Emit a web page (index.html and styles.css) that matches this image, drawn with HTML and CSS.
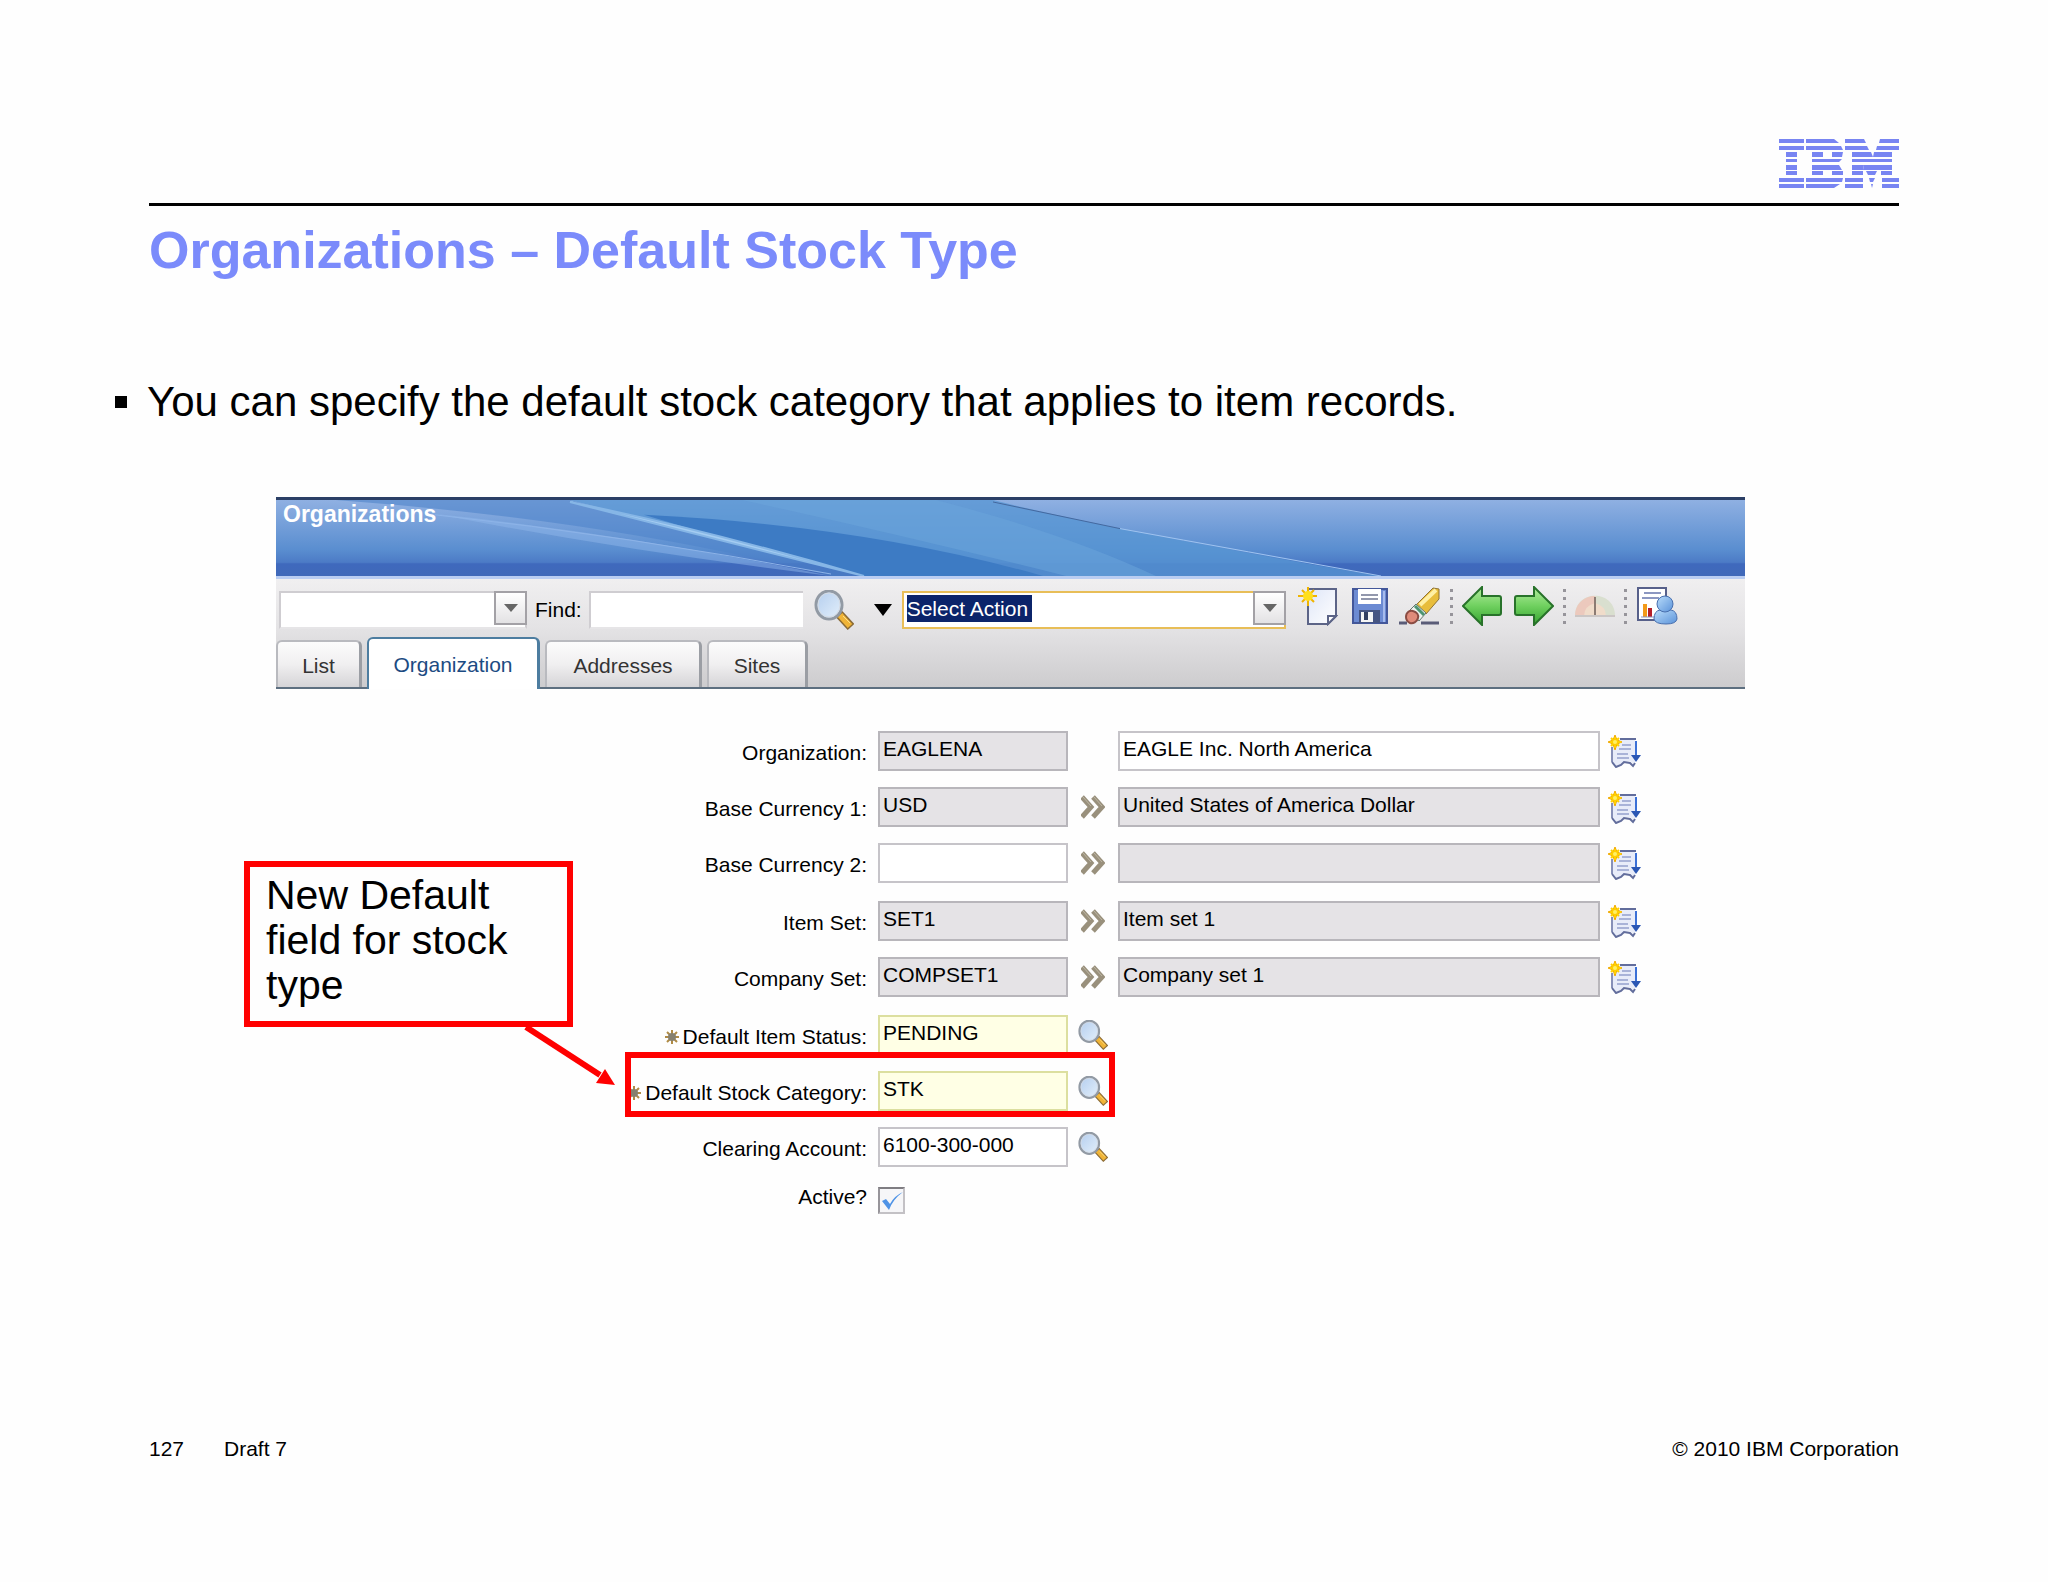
FILE: index.html
```html
<!DOCTYPE html>
<html lang="en">
<head>
    <meta charset="UTF-8">
    <meta name="viewport" content="width=device-width, initial-scale=1.0">
    <title>Organizations – Default Stock Type</title>
    <link rel="stylesheet" href="styles.css">
</head>
<body>
    <!-- Shared icons -->
    <svg class="sprite" aria-hidden="true">
        <defs>
            <linearGradient id="green" x1="0" y1="0" x2="0" y2="1">
                <stop offset="0" stop-color="#b4ec9e"/>
                <stop offset="0.5" stop-color="#6fd05f"/>
                <stop offset="1" stop-color="#35a32f"/>
            </linearGradient>
            <linearGradient id="paper" x1="0" y1="0" x2="1" y2="1">
                <stop offset="0" stop-color="#dfe6f8"/>
                <stop offset="1" stop-color="#ffffff"/>
            </linearGradient>
            <linearGradient id="glass" x1="0" y1="0" x2="1" y2="1">
                <stop offset="0" stop-color="#b3cdee"/>
                <stop offset="1" stop-color="#e4f0fb"/>
            </linearGradient>
            <linearGradient id="person" x1="0" y1="0" x2="1" y2="1">
                <stop offset="0" stop-color="#b9dcfa"/>
                <stop offset="1" stop-color="#5b93da"/>
            </linearGradient>
        </defs>
        <symbol id="search" viewBox="0 0 40 40">
            <path d="M25 24l12 13" stroke="#8a6a35" stroke-width="9"/>
            <path d="M26 25l10 11" stroke="#f0b437" stroke-width="6"/>
            <path d="M29 26l7 7" stroke="#fbe08a" stroke-width="1"/>
            <ellipse cx="15" cy="15" rx="13" ry="14" fill="url(#glass)" stroke="#929aa4" stroke-width="3"/>
            <ellipse cx="15" cy="15" rx="11" ry="12" fill="none" stroke="#d5dbe3" stroke-width="1"/>
        </symbol>
        <symbol id="goto" viewBox="0 0 24 24">
            <path d="M1 2l9 10-9 10M12 2l9 10-9 10" fill="none" stroke="#99907c" stroke-width="5"/>
            <path d="M2 2l8 9M13 2l8 9" fill="none" stroke="#bdb6a3" stroke-width="1"/>
        </symbol>
        <symbol id="longdesc" viewBox="0 0 33 33">
            <path d="M4 5h23v22l-2 2-3-3-5 1-4 3-5 1-4-4z" fill="#e8ecf9"/>
            <path d="M12 4h16" stroke="#626d9c" stroke-width="2"/>
            <path d="M4 12v15" stroke="#8790b8" stroke-width="2"/>
            <path d="M4 27l4 5 5-2 3-3 6 1 3 3 2-3" fill="none" stroke="#626d9c" stroke-width="2"/>
            <path d="M14 10h9M11 14h12M9 19h11M9 23h12" stroke="#a9b3d8" stroke-width="2"/>
            <path d="M28 6v15" stroke="#3b70d6" stroke-width="2"/>
            <path d="M23 20h10l-5 7z" fill="#2b57b4"/>
            <path d="M7 0l2 5 5 2-5 2-2 6-2-6-5-2 5-2z" fill="#ffd800" stroke="#f0a800" stroke-width="1"/>
            <path d="M7 2v11M2 7h11M3 3l8 8M11 3l-8 8" stroke="#ffcf00" stroke-width="2"/>
            <circle cx="7" cy="7" r="2" fill="#fff066"/>
        </symbol>
        <symbol id="required" viewBox="0 0 14 14">
            <path d="M7 0v14M0 7h14M2 2l10 10M12 2L2 12" stroke="#b08b45" stroke-width="2"/>
            <circle cx="7" cy="7" r="4" fill="#86806f"/>
        </symbol>
    </svg>

    <main class="slide">
        <header class="slide-header">
            <!-- Striped logo -->
            <svg class="logo" viewBox="0 0 120 49" role="img" aria-label="IBM">
                <g fill="#7885f2">
                    <path d="M0 0h25v4H0zM0 7h25v4H0zM7 13h11v5H7zM7 20h11v3H7zM7 26h11v5H7zM7 32h11v4H7zM0 39h25v4H0zM0 45h25v4H0z"/>
                    <path d="M27 0h28l5 4H27zM27 7h35l2 4H27zM33 13h11v5H33zM53 13h11l-1 5H53zM33 20h30l-3 3H33zM33 26h27l3 5H33zM33 32h11v4H33zM53 32h11v4H53zM27 39h37l-1 4H27zM27 45h34l-6 4H27z"/>
                    <path d="M66 0h19l2 4H66zM66 7h22l2 4H66zM73 13h19l2 5H73zM73 20h40v3H73zM73 26h11l1 5H73zM73 32h11v4H73zM66 39h18v4H66zM66 45h18v4H66z"/>
                    <path d="M101 0h19v4H100zM98 7h22v4H97zM95 13h18v5H94zM84 26h29v5H85zM87 32h11l-2 4h-7zM102 32h11v4h-11zM90 39h6l-2 4h-3zM103 39h17v4h-17zM92 45h2l-1 4zM103 45h17v4h-17z"/>
                </g>
            </svg>
        </header>

        <h1>Organizations – Default Stock Type</h1>

        <ul class="points">
            <li>You can specify the default stock category that applies to item records.</li>
        </ul>

        <section class="app">
            <div class="banner">
                <svg class="swoosh" viewBox="0 0 1469 77" preserveAspectRatio="none" aria-hidden="true">
                    <path d="M60 0H294Q420 36 588 77H555Q330 20 60 0z" fill="#4f84ca" opacity="0.6"/>
                    <path d="M294 0H717Q850 34 1105 77H588Q430 36 294 0z" fill="#5795d3" opacity="0.75"/>
                    <path d="M368 15Q590 26 767 77H588Q480 50 368 15z" fill="#3d7bc4"/>
                    <path d="M466 0H660Q790 34 880 77H790Q620 34 466 0z" fill="#6ba6dc" opacity="0.5"/>
                    <path d="M159 14Q350 34 555 77Q350 52 159 14z" fill="#8eb6ea" opacity="0.5"/>
                    <path d="M159 15Q350 36 555 75" fill="none" stroke="#8db3e8" stroke-width="1"/>
                    <path d="M294 2Q430 30 588 77Q440 40 294 2z" fill="#a5cdf2" stroke="#86b6e6" stroke-width="2"/>
                    <path d="M717 2L844 29" stroke="#44689e" stroke-width="1"/>
                    <path d="M844 29Q970 52 1105 77" fill="none" stroke="#9fc4f0" stroke-width="1"/>
                </svg>
                <h2>Organizations</h2>
            </div>

            <div class="tools">
                <div class="toolbar">
                    <span class="combo query">
                        <select aria-label="Query"><option></option></select>
                    </span>
                    <label for="find">Find:</label>
                    <input type="text" id="find">
                    <button class="search-btn" aria-label="Search"><svg><use href="#search"/></svg></button>
                    <button class="menu-btn" aria-label="Search options"><svg viewBox="0 0 18 12"><path d="M0 0h18l-9 12z"/></svg></button>
                    <span class="combo action">
                        <select aria-label="Action"><option>Select Action</option></select>
                    </span>
                    <div class="icons">
                        <button aria-label="New">
                            <svg viewBox="0 0 40 40">
                                <path d="M10 3h28v27l-8 8H10z" fill="url(#paper)" stroke="#5c6487" stroke-width="2"/>
                                <path d="M38 30h-8v8z" fill="#fff" stroke="#5c6487" stroke-width="2"/>
                                <path d="M10 1v19M0 10h19M4 4l12 12M16 4L4 16" stroke="#f0b400" stroke-width="2"/>
                                <circle cx="10" cy="10" r="5" fill="#ffdf1c"/>
                            </svg>
                        </button>
                        <button class="save" aria-label="Save">
                            <svg viewBox="0 0 40 40">
                                <path d="M3 3h34v34H3z" fill="#6c8bd3" stroke="#43579a" stroke-width="2"/>
                                <path d="M8 3h23v15H8z" fill="#fff"/>
                                <path d="M11 9h17M11 13h17" stroke="#9297ac" stroke-width="2"/>
                                <path d="M9 24h21v13H9z" fill="#465582"/>
                                <path d="M11 26h12v10H11z" fill="#f5f5f5"/>
                                <path d="M14 26h4v8h-4z" fill="#333f61"/>
                                <path d="M34 5v31" stroke="#a6bbed" stroke-width="2"/>
                            </svg>
                        </button>
                        <button class="clear" aria-label="Clear changes">
                            <svg viewBox="0 0 42 40">
                                <path d="M0 37h8M22 37h18" stroke="#5a5c78" stroke-width="3"/>
                                <path d="M17 19L34 2l6 1v10L27 28z" fill="#e8bd3c" stroke="#8f7335" stroke-width="1"/>
                                <path d="M21 19L37 4" stroke="#fff0a5" stroke-width="4"/>
                                <path d="M11 24l6-6 10 9-7 8z" fill="#edf3ef" stroke="#66766f" stroke-width="1"/>
                                <path d="M16 20l9 9" stroke="#4d9473" stroke-width="3"/>
                                <path d="M7 31c0-5 4-7 7-6 4 1 6 4 5 7-1 4-5 6-8 5-2-1-4-3-4-6z" fill="#e08b7a" stroke="#8a4c43" stroke-width="2"/>
                            </svg>
                        </button>
                        <i class="dots"></i>
                        <button class="prev" aria-label="Previous record">
                            <svg viewBox="0 0 40 40"><path d="M1 20L20 1v9h17q2 0 2 2v15q0 2-2 2H20v10z" fill="url(#green)" stroke="#28722a" stroke-width="2"/></svg>
                        </button>
                        <button class="next" aria-label="Next record">
                            <svg viewBox="0 0 40 40"><path d="M39 20L20 1v9H3q-2 0-2 2v15q0 2 2 2h17v10z" fill="url(#green)" stroke="#28722a" stroke-width="2"/></svg>
                        </button>
                        <i class="dots"></i>
                        <button class="kpi" aria-label="KPI" disabled>
                            <svg viewBox="0 0 40 40">
                                <path d="M0 30C0 3 40 3 40 30z" fill="#d9dfcf"/>
                                <path d="M0 30C0 17 10 10 20 10v20z" fill="#ecc9bd"/>
                                <path d="M9 30q0-10 11-13 11 3 11 13z" fill="#f0dcca"/>
                                <path d="M20 11v20" stroke="#8c7b73" stroke-width="2"/>
                                <path d="M0 30h40" stroke="#cbc6c5" stroke-width="2"/>
                            </svg>
                        </button>
                        <i class="dots"></i>
                        <button class="report" aria-label="Run reports">
                            <svg viewBox="0 0 42 40">
                                <path d="M2 2h28v32H2z" fill="#fff" stroke="#57608a" stroke-width="2"/>
                                <path d="M8 7h17M6 12h17" stroke="#8c97c1" stroke-width="2"/>
                                <path d="M7 18h4v13H7z" fill="#f39a18"/>
                                <path d="M12 22h4v9h-4z" fill="#b51f28"/>
                                <path d="M5 31h14" stroke="#8c97c1" stroke-width="1"/>
                                <path d="M18 33q0-8 6-9h11q6 1 6 9-1 5-11 5-11 0-12-5z" fill="url(#person)" stroke="#486fae" stroke-width="1"/>
                                <circle cx="29" cy="18" r="8" fill="url(#person)" stroke="#486fae" stroke-width="1"/>
                            </svg>
                        </button>
                    </div>
                </div>

                <nav class="tabs">
                    <a href="#list" class="tab-list">List</a>
                    <a href="#organization" class="tab-org active">Organization</a>
                    <a href="#addresses" class="tab-addr">Addresses</a>
                    <a href="#sites" class="tab-sites">Sites</a>
                </nav>
            </div>

            <form class="form">
                <div class="group">
                    <div class="row">
                        <label for="org">Organization:</label>
                        <input type="text" id="org" value="EAGLENA" readonly>
                        <span></span>
                        <input type="text" aria-label="Organization description" value="EAGLE Inc. North America">
                        <button type="button" class="long" aria-label="Long description"><svg><use href="#longdesc"/></svg></button>
                    </div>
                    <div class="row">
                        <label for="cur1">Base Currency 1:</label>
                        <input type="text" id="cur1" value="USD" readonly>
                        <button type="button" class="goto" aria-label="Detail menu"><svg><use href="#goto"/></svg></button>
                        <input type="text" aria-label="Base currency 1 description" value="United States of America Dollar" readonly>
                        <button type="button" class="long" aria-label="Long description"><svg><use href="#longdesc"/></svg></button>
                    </div>
                    <div class="row">
                        <label for="cur2">Base Currency 2:</label>
                        <input type="text" id="cur2">
                        <button type="button" class="goto" aria-label="Detail menu"><svg><use href="#goto"/></svg></button>
                        <input type="text" aria-label="Base currency 2 description" readonly>
                        <button type="button" class="long" aria-label="Long description"><svg><use href="#longdesc"/></svg></button>
                    </div>
                </div>

                <div class="group">
                    <div class="row">
                        <label for="itemset">Item Set:</label>
                        <input type="text" id="itemset" value="SET1" readonly>
                        <button type="button" class="goto" aria-label="Detail menu"><svg><use href="#goto"/></svg></button>
                        <input type="text" aria-label="Item set description" value="Item set 1" readonly>
                        <button type="button" class="long" aria-label="Long description"><svg><use href="#longdesc"/></svg></button>
                    </div>
                    <div class="row">
                        <label for="compset">Company Set:</label>
                        <input type="text" id="compset" value="COMPSET1" readonly>
                        <button type="button" class="goto" aria-label="Detail menu"><svg><use href="#goto"/></svg></button>
                        <input type="text" aria-label="Company set description" value="Company set 1" readonly>
                        <button type="button" class="long" aria-label="Long description"><svg><use href="#longdesc"/></svg></button>
                    </div>
                </div>

                <div class="group">
                    <div class="row">
                        <label for="status"><svg class="star"><use href="#required"/></svg>Default Item Status:</label>
                        <input type="text" id="status" class="required" value="PENDING">
                        <button type="button" class="lookup" aria-label="Select value"><svg><use href="#search"/></svg></button>
                    </div>
                    <div class="row highlighted">
                        <label for="stock"><svg class="star"><use href="#required"/></svg>Default Stock Category:</label>
                        <input type="text" id="stock" class="required" value="STK">
                        <button type="button" class="lookup" aria-label="Select value"><svg><use href="#search"/></svg></button>
                    </div>
                    <div class="row">
                        <label for="account">Clearing Account:</label>
                        <input type="text" id="account" value="6100-300-000">
                        <button type="button" class="lookup" aria-label="Select value"><svg><use href="#search"/></svg></button>
                    </div>
                </div>

                <div class="row check-row">
                    <label for="active">Active?</label>
                    <span class="check">
                        <input type="checkbox" id="active" checked>
                        <svg viewBox="0 0 27 27" aria-hidden="true"><path d="M4 14l4-2 4 5q4-8 13-12Q15 12 11 23z" fill="#4f93e6"/></svg>
                    </span>
                </div>
            </form>

            <!-- Annotation over the form -->
            <aside class="callout">
                New Default field for stock type
                <svg class="arrow" viewBox="0 0 94 64" aria-hidden="true">
                    <path d="M3 2l74 48" stroke="#ff0000" stroke-width="6"/>
                    <path d="M92 60l-19-2 9-14z" fill="#ff0000"/>
                </svg>
            </aside>
        </section>

        <footer class="slide-footer">
            <span class="page">127</span>
            <span>Draft 7</span>
            <span class="copyright">© 2010 IBM Corporation</span>
        </footer>
    </main>
</body>
</html>
```

FILE: styles.css
```css
*,
*::before,
*::after {
    box-sizing: border-box;
}

body {
    margin: 0;
    background-color: #fefefe;
    color: #000;
    font-family: "Liberation Sans", Arial, sans-serif;
}

button {
    display: block;
    flex: none;
    padding: 0;
    border: none;
    background: none;
    cursor: pointer;
}

svg {
    display: block;
    width: 100%;
    height: 100%;
}

.sprite {
    position: absolute;
    width: 0;
    height: 0;
}

/* Slide */
.slide {
    padding: 139px 149px 120px;
}

.slide-header {
    display: flex;
    justify-content: flex-end;
    padding-bottom: 15px;
    border-bottom: 3px solid #000;
}

.logo {
    width: 120px;
    height: 49px;
}

h1 {
    margin: 14px 0 0;
    color: #7b8bfb;
    font-size: 52px;
    line-height: 60px;
}

.points {
    margin: 98px 0 0;
    padding: 0;
    list-style: none;
    font-size: 42px;
    line-height: 48px;
}

.points li {
    display: flex;
    align-items: center;
    margin-left: -34px;
}

.points li::before {
    content: "";
    width: 12px;
    height: 12px;
    margin-right: 20px;
    background-color: #000;
}

/* Application window */
.app {
    position: relative;
    margin: 71px 154px 0 127px;
    font-size: 21px;
}

.banner {
    position: relative;
    height: 82px;
    border-top: 3px solid #2b3f66;
    border-bottom: 3px solid #b9cdf2;
    background: linear-gradient(#8fb0e2, #5a8ed0 65%, #4c7bc6 82%, #3f69bd 84%, #4069b9);
}

.swoosh {
    position: absolute;
    top: 0;
    left: 0;
}

.banner h2 {
    position: relative;
    margin: 0;
    padding: 1px 7px;
    color: #fff;
    font-size: 23px;
    line-height: 26px;
}

.tools {
    border-bottom: 2px solid #5d6f80;
    background: linear-gradient(#f0eff0, #e4e3e5 45%, #cdccce);
}

.toolbar {
    display: flex;
    align-items: center;
    height: 58px;
    padding: 4px 0 0 3px;
}

.toolbar label {
    margin: 0 7px 0 8px;
}

.toolbar input {
    width: 214px;
    height: 38px;
    padding: 0 6px;
    border: 2px solid #cfcdd1;
    border-right: none;
    border-bottom-color: #e6e5e7;
    background-color: #fff;
    font: inherit;
}

.combo {
    position: relative;
    flex: none;
    height: 38px;
}

.combo select {
    width: 100%;
    height: 38px;
    padding: 0 38px 4px 4px;
    border: 2px solid #cfcdd1;
    border-bottom-color: #e6e5e7;
    border-radius: 0;
    background-color: #fff;
    appearance: none;
    font: inherit;
}

/* Drop-down button at the end of a combo */
.combo::before {
    content: "";
    position: absolute;
    top: 0;
    right: 0;
    width: 33px;
    height: 34px;
    border: 2px solid #a3a1a6;
    background: linear-gradient(#fff, #e3e2e4);
    pointer-events: none;
}

.combo::after {
    content: "";
    position: absolute;
    top: 13px;
    right: 9px;
    border: 7px solid transparent;
    border-top: 8px solid #666;
    border-bottom: none;
    pointer-events: none;
}

.query {
    width: 248px;
}

.action {
    width: 384px;
}

.action select {
    padding-left: 3px;
    border-color: #e8be58;
    color: #fff;
    background: linear-gradient(#0b246a, #0b246a) 3px 2px / 125px 27px no-repeat #fff;
}

.action option {
    color: #000;
}

.search-btn {
    width: 40px;
    height: 40px;
    margin-left: 11px;
}

.menu-btn {
    width: 18px;
    height: 12px;
    margin: 0 10px 0 20px;
}

.icons {
    display: flex;
    align-items: center;
    gap: 9px;
    margin-left: 12px;
    padding-bottom: 8px;
}

.icons button {
    width: 40px;
    height: 40px;
}

.icons .save {
    margin-left: 3px;
}

.icons .clear,
.icons .report {
    width: 42px;
}

.icons .next {
    margin-left: 3px;
}

.dots {
    flex: none;
    width: 3px;
    height: 35px;
    background: repeating-linear-gradient(#96949a 0, #96949a 3px, transparent 3px, transparent 8px);
}

/* Tabs */
.tabs {
    display: flex;
    align-items: flex-end;
    gap: 5px;
}

.tabs a {
    display: flex;
    align-items: center;
    justify-content: center;
    height: 47px;
    padding-top: 2px;
    border: 2px solid #b9babf;
    border-right: 3px solid #9b9ea4;
    border-bottom: none;
    border-radius: 6px 6px 0 0;
    background: linear-gradient(#fcfcfc, #f0eff0 50%, #d5d4d7);
    color: #333;
    text-decoration: none;
}

.tabs .active {
    height: 52px;
    margin-bottom: -2px;
    border-color: #4d7da0;
    background: #fff;
    color: #1c4b82;
}

.tab-list {
    width: 86px;
}

.tab-org {
    width: 173px;
}

.tab-addr {
    width: 157px;
}

.tab-sites {
    width: 101px;
}

/* Form */
.form {
    padding: 42px 104px 0 0;
}

.group {
    display: grid;
    gap: 16px;
    margin-bottom: 18px;
}

.row {
    position: relative;
    display: grid;
    grid-template-columns: 602px 190px 50px 1fr 41px;
    align-items: center;
}

.row label {
    display: flex;
    align-items: center;
    justify-content: flex-end;
    padding: 4px 11px 0 0;
}

.row input[type="text"] {
    width: 100%;
    height: 40px;
    padding: 0 4px 5px 3px;
    border: 2px solid #c6c4c9;
    border-radius: 0;
    background-color: #fff;
    color: #000;
    font: inherit;
}

.row input[type="text"]:read-only {
    border-color: #b8b6bb;
    background-color: #e5e3e6;
}

.row input[type="text"].required {
    border-color: #dcdf9f;
    background-color: #ffffe5;
}

.star {
    width: 14px;
    height: 14px;
    margin-right: 4px;
}

.goto {
    justify-self: center;
    width: 24px;
    height: 24px;
}

.lookup {
    justify-self: center;
    width: 30px;
    height: 30px;
}

.long {
    justify-self: end;
    width: 33px;
    height: 33px;
}

/* Frame drawn round the new field */
.highlighted::after {
    content: "";
    position: absolute;
    top: -19px;
    left: 349px;
    z-index: 1;
    width: 490px;
    height: 65px;
    border: 6px solid #ff0000;
    pointer-events: none;
}

.check-row label {
    padding-top: 0;
    padding-bottom: 6px;
}

.check {
    position: relative;
    width: 27px;
    height: 27px;
}

.check input {
    display: block;
    width: 27px;
    height: 27px;
    margin: 0;
    border: 2px solid #c3c1c5;
    border-top-color: #7f7d82;
    border-left-color: #97959a;
    background-color: #f6f6f8;
    appearance: none;
}

.check svg {
    position: absolute;
    top: 0;
    left: 0;
    display: none;
    pointer-events: none;
}

.check input:checked + svg {
    display: block;
}

.callout {
    position: absolute;
    top: 364px;
    left: -32px;
    width: 329px;
    padding: 6px 16px 13px;
    border: 6px solid #ff0000;
    background-color: #fefefe;
    font-size: 41px;
    line-height: 45px;
}

.arrow {
    position: absolute;
    top: 158px;
    left: 273px;
    width: 94px;
    height: 64px;
}

/* Footer */
.slide-footer {
    display: flex;
    margin-top: 222px;
    font-size: 21px;
    line-height: 24px;
}

.page {
    width: 75px;
}

.copyright {
    margin-left: auto;
}
```
